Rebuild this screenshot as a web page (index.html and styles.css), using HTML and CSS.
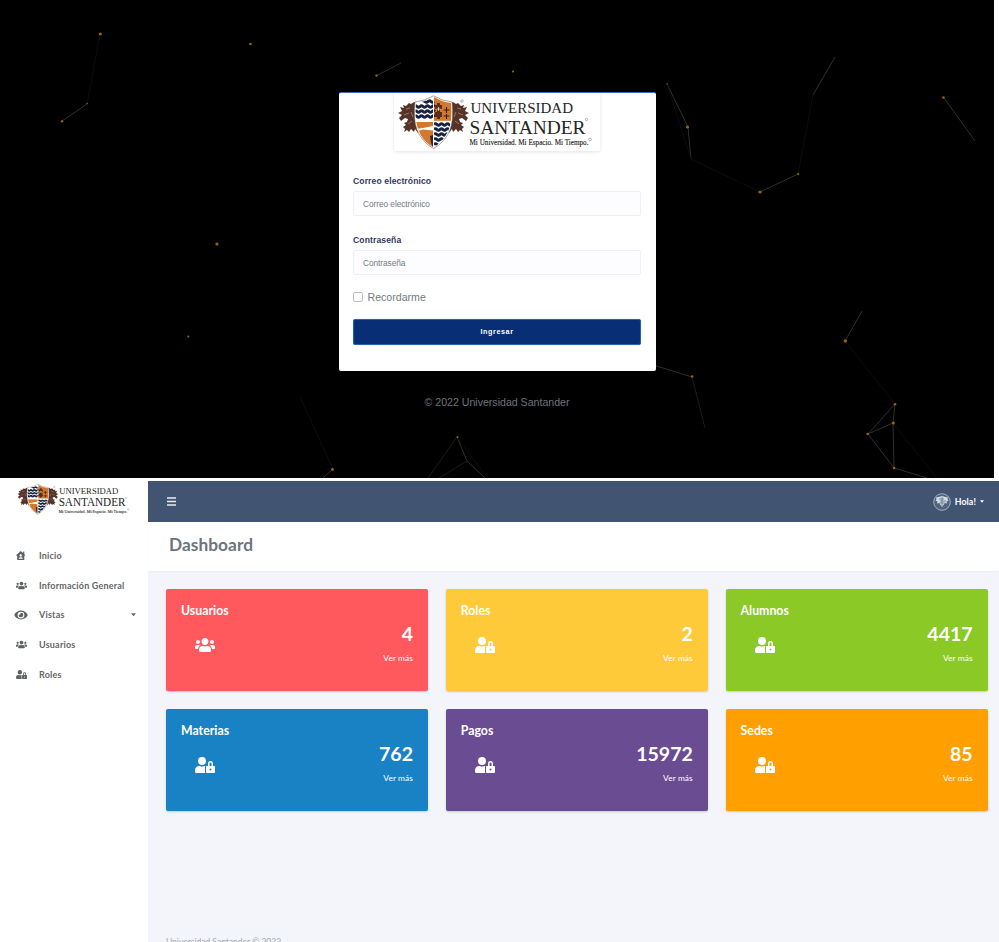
FILE: index.html
```html
<!DOCTYPE html>
<html lang="es">
<head>
<meta charset="utf-8">
<title>Universidad Santander</title>
<link rel="stylesheet" href="styles.css">
</head>
<body>
<svg class="defs" width="0" height="0">
  <defs>
    <clipPath id="shield-clip"><path d="M22 11Q31 10 39.500 4.800Q48 10 57 11Q58.500 27 55 37Q50 49 39.500 55.500Q28 49 24 37Q20.500 27 22 11Z"/></clipPath>
  </defs>
  <symbol id="lion" viewBox="0 0 20 38">
    <path fill="#553329" d="M20 4L16 2L13 4L11 3L8 6L5 5L6 8L2 7L4 11L0 13L4 15L1 18L3 21L7 18L10 19L9 22L6 23L8 25L5 27L7 29L6 32L9 30L11 32L13 29L16 32L17 29L20 33Z"/>
    <path fill="none" stroke="#bf8e74" stroke-width=".7" d="M8 9L12 8M6 15L11 13M10 24L14 21M13 12L15 17"/>
  </symbol>
  <symbol id="crest" viewBox="0 0 80 60">
    <use href="#lion" x="4" y="8" width="20" height="38"/>
    <use href="#lion" x="4" y="8" width="20" height="38" transform="translate(79 0) scale(-1 1)"/>
    <path fill="#fff" stroke="#6c655e" stroke-width=".6" d="M21 10Q31 9 39.500 3.800Q48 9 58 10Q60 27 56 38Q51 50 39.500 56.500Q28 50 23 38Q19 27 21 10Z"/>
    <g clip-path="url(#shield-clip)">
      <path fill="#fff" d="M20 4H40V29H20Z"/>
      <path fill="#d17a2d" d="M40 4H60V29H40ZM20 30H39V60H20Z"/>
      <g fill="none" stroke="#18213e" stroke-width="2.900">
        <path d="M28 9.500q1.500-1.500 3 0t3 0t3 0t3 0M20 14.500q1.500-1.500 3 0t3 0t3 0t3 0t3 0t3 0t3 0M20 19.500q1.500-1.500 3 0t3 0t3 0t3 0t3 0t3 0t3 0M20 24.500q1.500-1.500 3 0t3 0t3 0t3 0t3 0t3 0t3 0"/>
        <path d="M40 32.500q1.500-1.500 3 0t3 0t3 0t3 0t3 0t3 0M40 37.500q1.500-1.500 3 0t3 0t3 0t3 0t3 0t3 0M40 42.500q1.500-1.500 3 0t3 0t3 0t3 0t3 0M40 47.500q1.500-1.500 3 0t3 0t3 0t3 0M40 52.500q1.500-1.500 3 0t3 0"/>
      </g>
      <path fill="#5a2c18" d="M43 11h3v2h2v4h-2v3h2v5h-2v2h-3v-2h-2v-5h2v-3h-2v-4h2z"/>
      <path fill="none" stroke="#f0dccb" stroke-width=".8" d="M44.500 15v4M42.500 17h4"/>
      <path fill="none" stroke="#3a1d19" stroke-width="1.100" d="M52.500 15v6M49.500 18h6M52.500 22v5M49.500 24h6"/>
      <path fill="#fff" d="M21 37L29 36L39 34V38.500L29 37.500L24 39Z"/>
      <path fill="#34221f" d="M36 44L39 43V55L37 51Z"/>
      <path stroke="#fff" stroke-width="1" d="M20 29.300H60M39.500 4V57"/>
    </g>
  </symbol>
  <symbol id="users" viewBox="0 0 640 512">
    <path d="M96 224c35.300 0 64-28.700 64-64s-28.700-64-64-64-64 28.700-64 64 28.700 64 64 64zm448 0c35.300 0 64-28.700 64-64s-28.700-64-64-64-64 28.700-64 64 28.700 64 64 64zm32 32h-64c-17.600 0-33.500 7.100-45.100 18.600 40.300 22.100 68.900 62 75.100 109.400h66c17.700 0 32-14.300 32-32v-32c0-35.300-28.700-64-64-64zm-256 0c61.900 0 112-50.100 112-112S381.900 32 320 32 208 82.100 208 144s50.100 112 112 112zm76.800 32h-8.300c-20.800 10-43.900 16-68.500 16s-47.600-6-68.500-16h-8.300C179.600 288 128 339.600 128 403.200V432c0 26.500 21.500 48 48 48h288c26.500 0 48-21.500 48-48v-28.800c0-63.600-51.600-115.200-115.200-115.200zm-223.700-13.400C161.500 263.100 145.600 256 128 256H64c-35.300 0-64 28.700-64 64v32c0 17.700 14.300 32 32 32h65.900c6.300-47.400 34.900-87.300 75.200-109.400z"/>
  </symbol>
  <symbol id="user-lock" viewBox="0 0 640 512">
    <path fill-rule="evenodd" d="M224 256A128 128 0 1 0 96 128a128 128 0 0 0 128 128zm96 64a63 63 0 0 1 8.100-30.500c-4.800-.5-9.500-1.500-14.500-1.500h-16.700a174 174 0 0 1-145.800 0h-16.700A134.400 134.400 0 0 0 0 422.400V464a48 48 0 0 0 48 48h280.900a63.500 63.500 0 0 1-8.900-32zm288-32h-32v-80a80 80 0 0 0-160 0v80h-32a32 32 0 0 0-32 32v160a32 32 0 0 0 32 32h224a32 32 0 0 0 32-32V320a32 32 0 0 0-32-32zM496 432a32 32 0 1 1 32-32 32 32 0 0 1-32 32zm32-144h-64v-80a32 32 0 0 1 64 0z"/>
  </symbol>
  <symbol id="eye" viewBox="0 0 576 512">
    <path d="M572.500 241.400C518.300 135.600 410.900 64 288 64S57.700 135.600 3.500 241.400a32.400 32.400 0 0 0 0 29.200C57.700 376.400 165.100 448 288 448s230.300-71.600 284.500-177.400a32.400 32.400 0 0 0 0-29.200zM288 400a144 144 0 1 1 144-144 143.900 143.900 0 0 1-144 144zm0-240a95.300 95.300 0 0 0-25.300 3.800 47.900 47.900 0 0 1-66.900 66.900A95.800 95.800 0 1 0 288 160z"/>
  </symbol>
  <symbol id="home" viewBox="0 0 16 16">
    <path fill-rule="evenodd" d="M8 0L0 7l1 1.200 1-.7V15h12V7.500l1 .7 1-1.200-2-1.700V1h-2v2.500zM8 5.500a2 2 0 1 1 0 4 2 2 0 0 1 0-4zM4.700 13c0-3.300 6.600-3.300 6.600 0z"/>
  </symbol>
</svg>

<section class="login">
  <svg class="particles" viewBox="0 0 994 478">
    <g fill="none" stroke="#2f2f2f" stroke-width="1">
      <path d="M62 121L87 104M376 76L401 63M667 84L688 127L691 159M760 192L798 174M813 95L835 57M944 98L975 141M845 341L862 311M650 364L692 377M895 404L868 434L893 423L895 404M893 423L894 468L868 434M894 468L927 478M457 437L467 461L485 478M333 469L323 478"/>
      <path stroke="#1b1b1b" d="M692 377L705 428M467 461L439 478M457 437L428 478"/>
      <path stroke="#0d0d0d" d="M87 104L100 34M691 159L760 192M798 174L813 95M667 84L691 159M300 397L333 469M845 341L895 404M893 423L937 478M457 437L485 475"/>
    </g>
    <g fill="#986408">
      <circle cx="100.300" cy="34" r="1.600"/><circle cx="250.500" cy="44" r="1.300"/><circle cx="87" cy="103.600" r=".8"/><circle cx="62" cy="121.300" r="1.200"/><circle cx="217" cy="244" r="1.600"/><circle cx="188.300" cy="336.500" r="1.100"/><circle cx="376.500" cy="75.500" r="1.200"/><circle cx="513" cy="71.500" r="1.100"/><circle cx="667.200" cy="84" r=".8"/><circle cx="687.500" cy="127" r="1.600"/><circle cx="760" cy="192" r="1.600"/><circle cx="798.300" cy="174" r="1.100"/><circle cx="943.500" cy="97.500" r="1.300"/><circle cx="845.300" cy="341" r="1.700"/><circle cx="692.200" cy="376.500" r="1.300"/><circle cx="895" cy="404.300" r="1.300"/><circle cx="893.300" cy="423" r="1.500"/><circle cx="867.700" cy="434" r="1.300"/><circle cx="894" cy="468" r="1.300"/><circle cx="457.500" cy="437" r="1"/><circle cx="332.500" cy="469.500" r="1.400"/>
    </g>
  </svg>
  <form class="login-card">
    <div class="brand-box">
      <svg class="logo" width="206" height="60" viewBox="0 0 206 60">
        <use href="#crest" width="80" height="60"/>
        <text x="76.500" y="20.800" font-size="15.300" textLength="102.500" lengthAdjust="spacingAndGlyphs">UNIVERSIDAD</text>
        <text x="75.500" y="41.500" font-size="19.800" textLength="116" lengthAdjust="spacingAndGlyphs">SANTANDER</text>
        <text class="tagline" x="75.500" y="53" font-size="8.300" textLength="119" lengthAdjust="spacingAndGlyphs">Mi Universidad. Mi Espacio. Mi Tiempo.</text>
        <circle cx="196" cy="47.500" r="1.300"/><circle cx="192.500" cy="27.500" r="1.200"/><circle cx="68" cy="9" r="1.200"/>
      </svg>
    </div>
    <label class="field-label" for="email">Correo electrónico</label>
    <input class="field" id="email" type="text" placeholder="Correo electrónico">
    <label class="field-label second" for="pass">Contraseña</label>
    <input class="field" id="pass" type="password" placeholder="Contraseña">
    <label class="remember"><span class="check"></span>Recordarme</label>
    <button class="submit" type="button">Ingresar</button>
  </form>
  <p class="copyright">© 2022 Universidad Santander</p>
</section>

<section class="app">
  <aside class="sidebar">
    <svg class="logo side-logo" width="119" height="34.600" viewBox="0 0 206 60">
      <use href="#crest" width="80" height="60"/>
      <text x="76.500" y="20.800" font-size="15.300" textLength="102.500" lengthAdjust="spacingAndGlyphs">UNIVERSIDAD</text>
      <text x="75.500" y="41.500" font-size="19.800" textLength="116" lengthAdjust="spacingAndGlyphs">SANTANDER</text>
      <text class="tagline" x="75.500" y="53" font-size="8.300" textLength="119" lengthAdjust="spacingAndGlyphs">Mi Universidad. Mi Espacio. Mi Tiempo.</text>
      <circle cx="196" cy="47.500" r="1.300"/><circle cx="192.500" cy="27.500" r="1.200"/><circle cx="68" cy="9" r="1.200"/>
    </svg>
    <nav class="menu">
      <a class="item"><span class="ico"><svg width="9.500" height="9.500"><use href="#home"/></svg></span><span>Inicio</span></a>
      <a class="item"><span class="ico"><svg width="11" height="9"><use href="#users"/></svg></span><span>Información General</span></a>
      <a class="item"><span class="ico"><svg width="14" height="12"><use href="#eye"/></svg></span><span>Vistas</span><i class="caret"></i></a>
      <a class="item"><span class="ico"><svg width="11" height="9"><use href="#users"/></svg></span><span>Usuarios</span></a>
      <a class="item"><span class="ico"><svg width="11" height="9"><use href="#user-lock"/></svg></span><span>Roles</span></a>
    </nav>
  </aside>
  <main class="main">
    <header class="topbar">
      <svg class="burger" width="9" height="9" viewBox="0 0 9 9"><path d="M0 1H9M0 4.500H9M0 8H9"/></svg>
      <div class="profile">
        <svg width="18" height="18" viewBox="0 0 18 18"><circle cx="9" cy="9" r="8.300" fill="#50647f" stroke="#b9c4d0" stroke-width=".8"/><path fill="#d5dce4" d="M5.500 4L9 3l3.500 1 2.500.5-.5 2 1 1-2 1 .5 2-2-.5L9 14l-3-4-2 .5.500-2-2-1 1-1-.5-2z"/><path d="M6 6h5M7 8h6M6 10h6M9 4v9" stroke="#50647f" stroke-width=".7"/></svg>
        <span class="hello">Hola!</span><i class="caret"></i>
      </div>
    </header>
    <div class="heading"><h1>Dashboard</h1></div>
    <div class="cards">
      <article class="card red"><h2>Usuarios</h2><svg class="card-icon" width="20" height="16"><use href="#users"/></svg><div class="figures"><strong>4</strong><a>Ver más</a></div></article>
      <article class="card yellow"><h2>Roles</h2><svg class="card-icon" width="20" height="16"><use href="#user-lock"/></svg><div class="figures"><strong>2</strong><a>Ver más</a></div></article>
      <article class="card green"><h2>Alumnos</h2><svg class="card-icon" width="20" height="16"><use href="#user-lock"/></svg><div class="figures"><strong>4417</strong><a>Ver más</a></div></article>
      <article class="card blue"><h2>Materias</h2><svg class="card-icon" width="20" height="16"><use href="#user-lock"/></svg><div class="figures"><strong>762</strong><a>Ver más</a></div></article>
      <article class="card purple"><h2>Pagos</h2><svg class="card-icon" width="20" height="16"><use href="#user-lock"/></svg><div class="figures"><strong>15972</strong><a>Ver más</a></div></article>
      <article class="card orange"><h2>Sedes</h2><svg class="card-icon" width="20" height="16"><use href="#user-lock"/></svg><div class="figures"><strong>85</strong><a>Ver más</a></div></article>
    </div>
    <footer class="foot">Universidad Santander © 2022</footer>
  </main>
</section>
</body>
</html>
```
FILE: styles.css
```css
* { box-sizing: border-box; }
body { margin: 0; width: 999px; height: 942px; overflow: hidden; background: #fff; font-family: "Liberation Sans", sans-serif; }
.defs { position: absolute; }
h1, h2, p { margin: 0; }
.logo { display: block; overflow: visible; font-family: "Liberation Serif", serif; fill: #252525; }
.logo circle { fill: none; stroke: #666; stroke-width: .5; }
.logo .tagline { stroke: #252525; stroke-width: .15; }

.login { position: relative; width: 994px; height: 478px; background: #000; padding-top: 92px; }
.particles { position: absolute; inset: 0; width: 994px; height: 478px; }
.login-card { position: relative; width: 317px; height: 279px; margin: 0 auto; background: #fff; border-top: 1px solid #4863c8; border-radius: 2px; padding: 0 14.500px; display: flex; flex-direction: column; }
.brand-box { width: 206px; height: 58px; margin-left: 41px; box-shadow: 0 1px 3px rgba(60, 80, 110, .16); }
.brand-box .logo { margin-top: -1px; }
.field-label { margin-top: 24px; height: 12px; font-size: 8.600px; line-height: 12px; font-weight: 700; color: #34395e; letter-spacing: .1px; }
.field-label.second { margin-top: 18px; }
.field { margin-top: 4px; width: 288px; height: 25px; padding: 0 9px; border: 1px solid #eeeffa; border-radius: 2px; background: #fdfdff; font: 8.300px "Liberation Sans", sans-serif; letter-spacing: -.05px; }
.field::placeholder { color: #757b80; }
.remember { display: flex; align-items: center; gap: 4.500px; margin-top: 15px; height: 14px; font-size: 10.600px; color: #737a80; }
.check { width: 10px; height: 10px; border: 1px solid #bbc1c7; border-radius: 2px; }
.submit { margin-top: 15px; width: 288px; height: 26px; border: 1px solid #2961ae; border-radius: 2px; background: #082e75; color: #fff; font: 700 7.200px "Liberation Sans", sans-serif; letter-spacing: .6px; box-shadow: 0 0 1px #83b2e6; padding-bottom: 3px; }
.copyright { position: relative; margin-top: 24px; text-align: center; font-size: 10.600px; line-height: 14px; color: #6c757d; }

.app { display: flex; height: 461px; margin-top: 3px; font-family: Lato, sans-serif; }
.sidebar { width: 148px; background: #fff; }
.side-logo { margin: 1px 0 0 15px; }
.menu { margin-top: 24px; }
.item { display: flex; align-items: center; height: 29.700px; padding: 0 12px 0 14px; font-size: 9px; font-weight: 700; letter-spacing: .2px; color: #666; }
.ico { width: 14px; margin-right: 11px; display: flex; justify-content: center; fill: #5e6163; }
.caret { width: 5px; height: 3px; background: currentColor; clip-path: polygon(0 0, 100% 0, 50% 100%); }
.item .caret { margin-left: auto; }
.main { flex: 1; background: #f4f5fa; }
.topbar { height: 41px; background: #415572; display: flex; align-items: center; justify-content: space-between; padding: 0 15px 0 19px; color: #fff; }
.burger { stroke: #e8edf2; stroke-width: 1.700; }
.profile { display: flex; align-items: center; gap: 4px; }
.hello { font-size: 8.800px; font-weight: 700; letter-spacing: .1px; }
.profile svg { display: block; }
.profile .caret { width: 4px; height: 2.500px; }
.heading { height: 49px; background: #fff; padding: 13px 0 0 21px; box-shadow: 0 1px 2px rgba(0, 0, 0, .04); }
h1 { font-size: 17.300px; line-height: 20px; font-weight: 700; letter-spacing: .05px; color: #6c757d; }
.cards { display: grid; grid-template-columns: repeat(3, 262px); gap: 18px 17.800px; padding: 17.500px 0 0 18px; }
.card { height: 102.300px; border-radius: 2px; color: #fff; display: grid; grid-template: 30px 1fr / 1fr 1fr; padding: 0 15px; box-shadow: 0 1px 2px rgba(0, 0, 0, .18); }
.card h2 { grid-column: 1 / 3; padding-top: 14px; font-size: 12.300px; line-height: 16px; font-weight: 700; }
.card-icon { margin: 18px 0 0 14px; fill: #fff; }
.figures { display: flex; flex-direction: column; align-items: flex-end; padding-top: 3px; }
.figures strong { font-size: 19.500px; line-height: 24px; }
.figures a { margin-top: 7px; font-size: 8.400px; line-height: 11px; letter-spacing: .08px; }
.red { background: #ff595e; }
.yellow { background: #ffca3a; }
.green { background: #8ac926; }
.blue { background: #1982c4; }
.purple { background: #6a4c93; }
.orange { background: #ff9f00; }
.foot { margin: 125px 0 0 18px; font-size: 8.500px; line-height: 12px; color: #a2a8ae; }
```
